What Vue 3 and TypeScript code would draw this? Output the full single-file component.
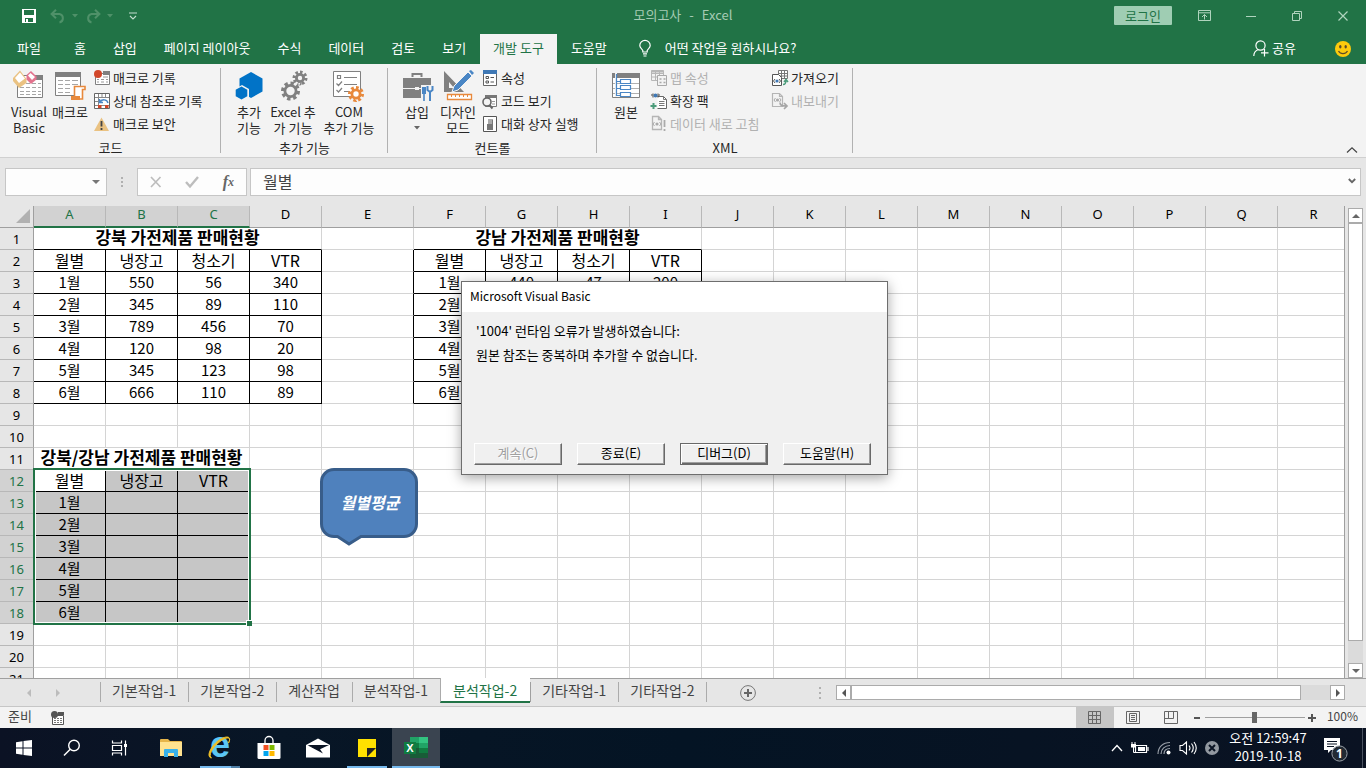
<script setup lang="ts">
import { ref } from 'vue'

interface Glyph { w: number; h: number; body: string }
interface Cell { key: string; text: string; span: number; cls: string[] }
interface SheetRow { n: number; cells: Cell[] }

const gear = (x: number, y: number, r: number, c: string, bg: string) =>
  `<circle cx="${x}" cy="${y}" r="${r}" fill="none" stroke="${c}" stroke-width="3.4" pathLength="16" stroke-dasharray="1.1 .9"/>` +
  `<circle cx="${x}" cy="${y}" r="${r - 2.2}" fill="${bg}" stroke="${c}" stroke-width="2.8"/>`

const glyphs: Record<string, Glyph> = {
  save: { w: 16, h: 16, body: '<path d="M1 1h14v14H1z" fill="#fff"/><path d="M3 2h10v5H3zM4 10h8v4H4z" fill="#217346"/><path d="M5 11h2v3H5z" fill="#fff"/>' },
  undo: { w: 16, h: 14, body: '<path d="M1.500 5h8a4.300 4.300 0 0 1 0 8.400M6 .8 1.600 5 6 9.200" fill="none" stroke="#4f9169" stroke-width="2"/>' },
  redo: { w: 16, h: 14, body: '<path d="M14.500 5h-8a4.300 4.300 0 0 0 0 8.400M10 .8 14.400 5 10 9.200" fill="none" stroke="#4f9169" stroke-width="2"/>' },
  tri: { w: 6, h: 4, body: '<path d="M0 0h6L3 3.400z" fill="#4f9169"/>' },
  custom: { w: 10, h: 8, body: '<path d="M1 1h8M2 4l3 3 3-3" fill="none" stroke="#c4decf" stroke-width="1.100"/>' },
  ribbonOpt: { w: 14, h: 12, body: '<path d="M.5.5h12v10H.5zM.5 2.800h12M6.500 9.500V4.500M4 7l2.500-2.500L9 7" fill="none" stroke="#b0d4be"/>' },
  min: { w: 10, h: 10, body: '<path d="M0 5.500h10" stroke="#b0d4be"/>' },
  restore: { w: 10, h: 10, body: '<path d="M.5 2.500h7v7h-7zM2.500 2.500v-2h7v7h-2" fill="none" stroke="#b0d4be"/>' },
  close: { w: 10, h: 10, body: '<path d="M.5.5l9 9M9.500.5l-9 9" stroke="#b0d4be" stroke-width="1.200"/>' },
  bulb: { w: 12, h: 17, body: '<path d="M3.800 12v-1.500C3 8.500.8 8 .8 5.500a5 5 0 0 1 10.400 0C11.200 8 9 8.500 8.200 10.500V12zM4 13.800h4M4.500 16h3" fill="none" stroke="#fff" stroke-width="1.200"/>' },
  share: { w: 16, h: 17, body: '<circle cx="7.500" cy="5.500" r="4.600" fill="none" stroke="#fff" stroke-width="1.200"/><path d="M.8 16c0-3.500 2-5.500 4.500-6.500M11.500 9v7.500M8 12.800h7.500" fill="none" stroke="#fff" stroke-width="1.200"/>' },
  smile: { w: 16, h: 16, body: '<circle cx="8" cy="8" r="8" fill="#fdca0c"/><ellipse cx="5.300" cy="5.800" rx="1.200" ry="1.800" fill="#5c4a2a"/><ellipse cx="10.700" cy="5.800" rx="1.200" ry="1.800" fill="#5c4a2a"/><path d="M3.500 10c2 3.600 7 3.600 9 0" fill="none" stroke="#5c4a2a" stroke-width="1.200"/>' },
  collapse: { w: 12, h: 6, body: '<path d="M1 5.500 6 .8l5 4.700" fill="none" stroke="#444" stroke-width="1.200"/>' },
  vb: { w: 32, h: 32, body: '<path d="M4.500 6.500h25v22h-25z" fill="#fff" stroke="#808080"/><path d="M23 6h7v5h-7z" fill="#808080"/><path d="M7 14.500h4m2 0h4m2 0h4m2 0h3M7 18.500h4m2 0h4m2 0h4m2 0h3M7 22.500h4m2 0h4m2 0h4m2 0h3M7 25.500h4m2 0h4m2 0h4m2 0h3" stroke="#a6a6a6"/><path d="M0 9 7 1.500 13.500 10v4L6 19 0 12z" fill="#eac282"/><path d="m2 9 5-5.500 5 6-6 4.500z" fill="#fff"/><path d="m13.500 6 4.500-4 5.500 5.500v3L18 15l-4.500-4.500z" fill="#e3738e"/><path d="m15 6.500 2.500-2.500 4.500 4-3 3z" fill="#fff"/>' },
  macro: { w: 32, h: 32, body: '<path d="M1.500 3.500h25v23h-25z" fill="#fff" stroke="#808080"/><path d="M1 3h26v5H1z" fill="#808080"/><path d="M4 11.500h5m2 0h5m2 0h6M4 15.500h5m2 0h5m2 0h6M4 19.500h5m2 0h5M4 23.500h5m2 0h5" stroke="#a6a6a6"/><path d="M20.500 28V17.500h10.500v3h-2.500V30H18v-2.500" fill="#fff" stroke="#e8893c" stroke-width="1.600"/><path d="M17 27h9v4h-9z" fill="#e8893c"/>' },
  addin: { w: 32, h: 32, body: '<path d="M18 3 29.500 9.500v13L18 29 6.500 22.500v-13z" fill="#0173c7"/><path d="m9 16 7 4v8l-7 4-7-4v-8z" fill="#f3f3f3"/><path d="m8.500 17.500 5.800 3.200v6.500l-5.800 3.200-5.800-3.200v-6.500z" fill="#0173c7"/>' },
  gears: { w: 32, h: 32, body: gear(13.5, 22, 7.8, '#808080', '#f3f3f3') + gear(23, 9, 5.8, '#808080', '#f3f3f3') },
  com: { w: 32, h: 32, body: '<path d="M.5 2.500h27v25H.5z" fill="#fff" stroke="#808080"/><path d="M4.500 6.500h3v3h-3zM11 8.500h13M11 15.500h13M11 22.500h6M3.500 14.500l2 2 3.500-4M3.500 21l2 2 3.500-4" fill="none" stroke="#808080" stroke-width="1.200"/>' + gear(23, 25, 6.3, '#e8893c', '#fff') },
  toolbox: { w: 32, h: 32, body: '<path d="M11.500 8V5h9v3" fill="none" stroke="#808080" stroke-width="2"/><path d="M2 9h28v20H2z" fill="#808080"/><path d="M2 19.500h28" stroke="#f3f3f3"/><path d="M14 18h4v3h-4z" fill="#f3f3f3"/><path d="M20 16h12v16H20z" fill="#f3f3f3"/><path d="M21 18h4v7h-4zM22.200 25h1.600v7h-1.600z" fill="#4a86c5"/><path d="M26.500 17v4l2.500 2 2.500-2v-4M29 22v10" fill="none" stroke="#4a86c5" stroke-width="2"/>' },
  design: { w: 32, h: 32, body: '<path fill-rule="evenodd" d="M2 2 22 23H2zM7 13v6h5z" fill="#808080"/><path d="M10 23 12 17 26 3l4 4-14 14z" fill="#4a86c5" stroke="#f3f3f3"/><path d="m27 2 2-1 3 3-2 2z" fill="#4a86c5"/><path d="M5.500 25.500h24v5h-24z" fill="#fff" stroke="#e8893c" stroke-width="1.300"/><path d="M9.500 26v2m4-2v2m4-2v2m4-2v2m4-2v2" stroke="#e8893c"/>' },
  source: { w: 32, h: 32, body: '<path d="M2.500 4.500h27v24h-27z" fill="#fff" stroke="#808080"/><path d="M2 4h28v5H2z" fill="#808080"/><path d="M3 14.500h26M3 19.500h26M3 24.500h26" stroke="#b0b0b0"/><path d="M6 4v24" stroke="#f3f3f3" stroke-width="2"/><path d="M6.500 5v21.500h4M6.500 12.500h4M6.500 19.500h4" fill="none" stroke="#4a86c5" stroke-width="1.200"/><path d="M10.500 10.500h10v4h-10zM10.500 16.500h10v4h-10zM10.500 23.500h10v4h-10z" fill="#fff" stroke="#4a86c5" stroke-width="1.200"/>' },
  record: { w: 16, h: 16, body: '<path d="M1.500 3.500h14v11h-14z" fill="#fff" stroke="#808080"/><path d="M9 1h7v4H9z" fill="#808080"/><path d="M3 9.500h2m2 0h3m2 0h2M3 12h2m2 0h3m2 0h2M9 7h5" stroke="#999"/><circle cx="4" cy="4" r="4" fill="#d2472a"/>' },
  relative: { w: 16, h: 16, body: '<path d="M.5.5h15v15H.5z" fill="#fff" stroke="#666"/><path d="M1 4.500h14M4.500 1v14M11.500 1v3M1 8.500h3M1 12.500h14M8 1v3" stroke="#888"/><path d="M5 5h10v7H5z" fill="#fff"/><path d="M6 9c2-3 7-3 8 1M5.500 6v3.500H9" fill="none" stroke="#4a86c5" stroke-width="1.500"/><path d="M4 12h3.500v3H4zM11 12h3.500v3H11z" fill="#d2472a"/>' },
  security: { w: 16, h: 16, body: '<path d="M7.500 1.500 15 15H0z" fill="#eac282"/><path d="M7.500 5v5.500M7.500 12v2" stroke="#444" stroke-width="1.800"/>' },
  props: { w: 16, h: 16, body: '<path d="M1.500.5h13v15h-13z" fill="#fff" stroke="#666"/><path d="M1 0h14v4H1z" fill="#3f78b5"/><path d="M4 6.500h2.500v2H4zM4 11h2.500v2H4zM8.500 7.500H12M8.500 12H12" fill="none" stroke="#555"/>' },
  viewCode: { w: 16, h: 16, body: '<path d="M3.500 2.500h11v11h-11z" fill="#fff" stroke="#777"/><path d="M3 2h12v3H3z" fill="#777"/><path d="M10 8.500h3M10 11h3" stroke="#999"/><circle cx="5" cy="9" r="4" fill="#f3f3f3" stroke="#666" stroke-width="1.600"/><path d="m7.500 12 3 3.500" stroke="#666" stroke-width="2"/>' },
  runDialog: { w: 16, h: 16, body: '<path d="M1.500.5h13v15h-13z" fill="#fff" stroke="#555"/><path d="M6 3h5v5H6z" fill="#aaa"/><path d="M5 8h5v5H5z" fill="#777"/><path d="M10.500 4v9M5 13.500h6" stroke="#777"/>' },
  mapProps: { w: 16, h: 16, body: '<path d="M.5.5h12v10H.5zM.5 3.500h12M4.500.5v10M8.500.5v10M.5 7h12" fill="none" stroke="#b7b7b7"/><path d="M.5.5h12v2H.5z" fill="#b7b7b7"/><path d="M6.500 5.500h9v10h-9z" fill="#f3f3f3" stroke="#a9a9a9"/><path d="M8.500 9h2m2 0h2m-6 3.500h2m2 0h2" stroke="#a9a9a9" stroke-width="1.500"/>' },
  expand: { w: 16, h: 16, body: '<path d="M6.500 3.500h6l3 3v9h-9" fill="#fff" stroke="#666"/><path d="M12.500 3.500v3h3M8 8.500h5.500M8 10.500h5.500M8 12.500h5.500" fill="none" stroke="#777"/><path d="M0 2h1.500M7.500 2H9M2 .5v4M7 .5v4" stroke="#444"/><circle cx="4.500" cy="2.500" r="1.900" fill="#3f78b5"/><path d="M2.500 10v6M-.5 13h6" stroke="#4c9c7b" stroke-width="2"/>' },
  refresh: { w: 16, h: 16, body: '<path d="M1.500.5h6l3 3v10h-9zM7.500.5v3h3" fill="none" stroke="#b5b5b5" stroke-width="1.300"/><path d="m3.500 6-1.500 2 1.500 2M8.500 6l1.500 2-1.500 2" fill="none" stroke="#aaa"/><circle cx="6" cy="8" r="1.600" fill="#aaa"/><path d="M13.500 4v7M13.500 13v2" stroke="#aaa" stroke-width="1.800"/>' },
  importX: { w: 16, h: 16, body: '<path d="M6.500.5h9v8h-9zM6.500 3.500h9M9.500.5v8M12.500.5v8M6.500 6h9" fill="#fff" stroke="#777"/><path d="M.5 4.500h6l3 3v8h-9z" fill="#fff" stroke="#555"/><path d="m3 9-1.500 2L3 13M7 9l1.500 2L7 13" fill="none" stroke="#555"/><circle cx="5" cy="11" r="1.600" fill="#3f78b5"/><path d="M11 14.500c3 0 3-2 3-4.500M12 12l2-2.500 2 2.500" fill="none" stroke="#4c9c7b" stroke-width="1.500"/>' },
  exportX: { w: 16, h: 16, body: '<path d="M.5.5h7l3 3v10H.5zM7.500.5v3h3" fill="none" stroke="#b5b5b5" stroke-width="1.200"/><path d="m3.500 5-1.500 2 1.500 2M7.500 5 9 7 7.500 9" fill="none" stroke="#aaa"/><circle cx="5.500" cy="7" r="1.600" fill="#aaa"/><path d="M8 9.500c0 3 2 3.500 7 3.500M12 10l3 3-3 3" fill="none" stroke="#a5a5a5" stroke-width="1.700"/>' },
  smallTri: { w: 8, h: 4, body: '<path d="M0 0h8L4 4z" fill="#777"/>' },
  cancel: { w: 12, h: 12, body: '<path d="m1 1 9.500 10M10.500 1 1 11" stroke="#bdbdbd" stroke-width="1.700"/>' },
  check: { w: 14, h: 12, body: '<path d="m1 6 4 4.500L13 1" fill="none" stroke="#bdbdbd" stroke-width="2.400"/>' },
  expandBar: { w: 8, h: 6, body: '<path d="m.8 1 3.200 3.200L7.200 1" fill="none" stroke="#666" stroke-width="1.800"/>' },
  corner: { w: 14, h: 14, body: '<path d="M14 0v14H0z" fill="#b1b1b1"/>' },
  up: { w: 8, h: 4, body: '<path d="M4 0l4 4H0z" fill="#666"/>' },
  down: { w: 8, h: 4, body: '<path d="M0 0h8L4 4z" fill="#666"/>' },
  left: { w: 4, h: 8, body: '<path d="M4 0v8L0 4z" fill="#555"/>' },
  right: { w: 4, h: 8, body: '<path d="M0 0v8l4-4z" fill="#555"/>' },
  prev: { w: 4, h: 8, body: '<path d="M4 0v8L0 4z" fill="#bcbcbc"/>' },
  next: { w: 4, h: 8, body: '<path d="M0 0v8l4-4z" fill="#bcbcbc"/>' },
  plus: { w: 16, h: 16, body: '<circle cx="8" cy="8" r="7.400" fill="none" stroke="#777"/><path d="M8 4v8M4 8h8" stroke="#666" stroke-width="2"/>' },
  macroState: { w: 14, h: 14, body: '<path d="M1.500 4.500h11v9h-11z" fill="#fff" stroke="#555"/><path d="M7 1h6v3H7z" fill="#555"/><path d="M3 7.500h2m1 0h2m1 0h2M3 9.500h2m1 0h2m1 0h2M3 11.500h2m1 0h2m1 0h2" stroke="#777"/><circle cx="3.500" cy="3.500" r="3.500" fill="#555"/>' },
  normal: { w: 14, h: 14, body: '<path d="M.5.5h12v12H.5zM4.500.5v12M8.500.5v12M.5 4.500h12M.5 8.500h12" fill="none" stroke="#666"/>' },
  pageLayout: { w: 14, h: 14, body: '<path d="M.5.5h13v12H.5zM3.500 2.500h7v8h-7zM5 4.500h4M5 6.500h4M5 8.500h4" fill="none" stroke="#666"/>' },
  pageBreak: { w: 14, h: 14, body: '<path d="M.5.5h13v12H.5zM4.500.5v7M9.500.5v7M.5 7.500h9" fill="none" stroke="#666"/>' },
  start: { w: 16, h: 16, body: '<path d="M0 2.200 6.500 1.300v6.200H0zM7.500 1.100 16 0v7.500H7.500zM0 8.500h6.500v6.200L0 13.800zM7.500 8.500H16V16l-8.500-1.100z" fill="#fff"/>' },
  search: { w: 18, h: 18, body: '<circle cx="11" cy="6.500" r="5.300" fill="none" stroke="#fff" stroke-width="1.400"/><path d="M7.200 10.300 1 16.500" stroke="#fff" stroke-width="1.500"/>' },
  taskview: { w: 18, h: 16, body: '<path d="M1.500.5v2.500h9V.5M1.500 5.500h9v5h-9zM1.500 15.500V13h9v2.500M14.500.5v15" fill="none" stroke="#fff" stroke-width="1.200"/><path d="M13 4h3v3h-3z" fill="#fff"/>' },
  explorer: { w: 22, h: 20, body: '<path d="M0 2q0-1 1-1h7l2 2h11q1 0 1 1v14H0z" fill="#e6b54a"/><path d="M0 4h22v14H0z" fill="#ffe28f"/><path d="M4 19v-7q0-1 1-1h12q1 0 1 1v7h-4v-4H8v4z" fill="#39b1ea"/>' },
  ie: { w: 24, h: 24, body: '<text x="12" y="21" text-anchor="middle" font-family="Liberation Sans, sans-serif" font-weight="bold" font-size="36" fill="#5cc7f5">e</text><path d="M3.500 22C-2.500 21 3 9 12 3.500 19-.8 24 .5 20.500 7 24 0 18 1 12 5.500 4 11.500 0 20 3.500 22z" fill="#eebf28" stroke="#eebf28"/>' },
  store: { w: 24, h: 24, body: '<path d="M8 7V4.500a4 4 0 0 1 8 0V7" fill="none" stroke="#fff" stroke-width="1.300"/><path d="M.5 7h23v14.500q0 1.500-1.500 1.500H2q-1.500 0-1.500-1.500z" fill="#fff"/><path d="M6.500 9h5v5h-5z" fill="#f25022"/><path d="M12.500 9h5v5h-5z" fill="#7fba00"/><path d="M6.500 15h5v5h-5z" fill="#00a4ef"/><path d="M12.500 15h5v5h-5z" fill="#ffb900"/>' },
  mail: { w: 24, h: 20, body: '<path d="M0 7 12 .5 24 7v12.500H0z" fill="#fff"/><path d="M1.500 7h21.500l-9.500 4.500h-2.500z" fill="#0a1424"/><path d="m2 7.500 15 8-3.500-5z" fill="#0a1424"/>' },
  sticky: { w: 18, h: 18, body: '<path d="M0 0h18v18H0z" fill="#ffe100"/><path d="M9 18V9h9z" fill="#222"/>' },
  excel: { w: 24, h: 22, body: '<path d="M6 0h9v6H6z" fill="#21a366"/><path d="M15 0h9v6h-9z" fill="#33c481"/><path d="M6 6h9v5H6z" fill="#107c41"/><path d="M15 6h9v5h-9z" fill="#21a366"/><path d="M6 11h18v10H6z" fill="#185c37"/><path d="M15 11h9v5h-9z" fill="#107c41"/><path d="M0 5h12v12H0z" fill="#107c41"/><text x="6" y="15" text-anchor="middle" font-family="Liberation Sans, sans-serif" font-weight="bold" font-size="11" fill="#fff">X</text>' },
  chevron: { w: 12, h: 8, body: '<path d="m1 7 5-5.500L11 7" fill="none" stroke="#fff" stroke-width="1.300"/>' },
  battery: { w: 18, h: 12, body: '<path d="M4.500 3.500h11v7h-11zM17 5v4" fill="none" stroke="#fff" stroke-width="1.200"/><path d="M7 5h7v4H7z" fill="#fff"/><path d="M0 2h5v3.500H0z" fill="#fff"/><path d="M1 0v3M4 0v3M2.500 5v5.500H5" fill="none" stroke="#fff"/>' },
  wifi: { w: 14, h: 14, body: '<path d="M1 13C1 6 6 1.500 13 1.500M4 13c0-5 4-8.500 9-8.500M7 13c0-3.500 2.500-5.500 6-5.500" fill="none" stroke="#999fa8" stroke-width="1.200"/><circle cx="11.500" cy="11.500" r="2" fill="#fff"/>' },
  volume: { w: 18, h: 14, body: '<path d="M1 4.500h2.500l4-3.500v12l-4-3.500H1zM10 4.500q2 2.500 0 5M12.500 2.500q3.500 4.500 0 9M15 1q4.500 6 0 12" fill="none" stroke="#fff" stroke-width="1.100"/>' },
  blocked: { w: 14, h: 14, body: '<circle cx="7" cy="7" r="7" fill="#9298a0"/><path d="m4 4 6 6M10 4l-6 6" stroke="#0b1424" stroke-width="2"/>' },
  notify: { w: 26, h: 26, body: '<path d="M1 1h16v12H8l-3 3v-3H1z" fill="#fff"/><path d="M4 4.500h10M4 7h10M4 9.500h7" stroke="#0b1424"/><circle cx="16.500" cy="16.500" r="7.600" fill="#222a33" stroke="#9aa0a8"/><text x="16.500" y="21" text-anchor="middle" font-family="Noto Sans, sans-serif" font-weight="bold" font-size="12" fill="#fff">1</text>' },
}

const tabs = ['홈', '삽입', '페이지 레이아웃', '수식', '데이터', '검토', '보기', '개발 도구', '도움말']

const codeItems = [
  { icon: 'record', text: '매크로 기록', off: false },
  { icon: 'relative', text: '상대 참조로 기록', off: false },
  { icon: 'security', text: '매크로 보안', off: false },
]
const controlItems = [
  { icon: 'props', text: '속성', off: false },
  { icon: 'viewCode', text: '코드 보기', off: false },
  { icon: 'runDialog', text: '대화 상자 실행', off: false },
]
const xmlItems = [
  { icon: 'mapProps', text: '맵 속성', off: true },
  { icon: 'expand', text: '확장 팩', off: false },
  { icon: 'refresh', text: '데이터 새로 고침', off: true },
]
const transferItems = [
  { icon: 'importX', text: '가져오기', off: false },
  { icon: 'exportX', text: '내보내기', off: true },
]

const columns = 'ABCDEFGHIJKLMNOPQR'.split('')
const values: Record<string, string> = {
  A1: '강북 가전제품 판매현황', F1: '강남 가전제품 판매현황', A11: '강북/강남 가전제품 판매현황',
  G3: '440', H3: '47', I3: '200',
  A12: '월별', B12: '냉장고', C12: 'VTR',
}
const north = [[550, 56, 340], [345, 89, 110], [789, 456, 70], [120, 98, 20], [345, 123, 98], [666, 110, 89]]
for (const start of ['A', 'F']) {
  const at = columns.indexOf(start)
  ;['월별', '냉장고', '청소기', 'VTR'].forEach((t, i) => { values[columns[at + i] + '2'] = t })
}
north.forEach((line, i) => {
  const month = `${i + 1}월`
  values['A' + (i + 3)] = month
  values['F' + (i + 3)] = month
  values['A' + (i + 13)] = month
  line.forEach((v, c) => { values[columns[c + 1] + (i + 3)] = String(v) })
})
const spans: Record<string, number> = { A1: 4, F1: 4, A11: 3 }

const rows: SheetRow[] = []
for (let n = 1; n <= 21; n++) {
  const cells: Cell[] = []
  for (let c = 0; c < columns.length;) {
    const key = columns[c] + n
    const span = spans[key] ?? 1
    const cls: string[] = []
    const text = values[key] ?? ''
    const inTop = n >= 2 && n <= 8
    const framed = (inTop && (c <= 3 || (c >= 5 && c <= 8))) || (n >= 12 && n <= 18 && c <= 2)
    if (framed) cls.push('framed')
    if (inTop && c === 4) cls.push('edge')
    if (span > 1) cls.push('heading')
    if (/^\d/.test(text)) cls.push('figure')
    if (n >= 12 && n <= 18 && c <= 2 && key !== 'A12') cls.push('picked')
    cells.push({ key, text, span, cls })
    c += span
  }
  rows.push({ n, cells })
}

const sheets = ['기본작업-1', '기본작업-2', '계산작업', '분석작업-1', '분석작업-2', '기타작업-1', '기타작업-2']
const currentSheet = ref('분석작업-2')
const formula = ref('월별')
const nameBox = ref('')
const zoom = ref(50)

const apps = [
  { icon: 'explorer', label: '파일 탐색기', state: '' },
  { icon: 'ie', label: 'Internet Explorer', state: 'open split' },
  { icon: 'store', label: 'Microsoft Store', state: '' },
  { icon: 'mail', label: '메일', state: '' },
  { icon: 'sticky', label: '스티커 메모', state: 'open' },
  { icon: 'excel', label: 'Excel', state: 'open current' },
]
const g = (name: string) => glyphs[name]
</script>

<template>
  <div class="screen">
    <header class="top">
      <div class="titlebar">
        <div class="quick">
          <button class="plain" aria-label="저장"><svg class="save" :width="g('save').w" :height="g('save').h" v-html="g('save').body" /></button>
          <button class="plain pair" aria-label="실행 취소"><svg width="16" height="14" v-html="g('undo').body" /><svg width="6" height="4" v-html="g('tri').body" /></button>
          <button class="plain pair" aria-label="다시 실행"><svg width="16" height="14" v-html="g('redo').body" /><svg width="6" height="4" v-html="g('tri').body" /></button>
          <button class="plain" aria-label="빠른 실행 도구 모음 사용자 지정"><svg width="10" height="8" v-html="g('custom').body" /></button>
        </div>
        <div class="doc"><span>모의고사</span><span>-</span><span>Excel</span></div>
        <div class="window">
          <button class="login">로그인</button>
          <button v-for="w in ['ribbonOpt', 'min', 'restore', 'close']" :key="w" class="plain win" :aria-label="w">
            <svg :width="g(w).w" :height="g(w).h" v-html="g(w).body" />
          </button>
        </div>
      </div>
      <nav class="tabs">
        <button class="tab file">파일</button>
        <button v-for="t in tabs" :key="t" class="tab" :class="{ active: t === '개발 도구' }">{{ t }}</button>
        <button class="tab ask"><svg width="12" height="17" v-html="g('bulb').body" />어떤 작업을 원하시나요?</button>
        <button class="plain share"><svg width="16" height="17" v-html="g('share').body" />공유</button>
        <button class="plain smile" aria-label="의견"><svg width="16" height="16" v-html="g('smile').body" /></button>
      </nav>
    </header>

    <section class="ribbon">
      <div class="group">
        <div class="tools">
          <button class="big w44"><svg width="32" height="32" v-html="g('vb').body" />Visual<br>Basic</button>
          <button class="big w40"><svg width="32" height="32" v-html="g('macro').body" />매크로</button>
          <div class="stack">
            <button v-for="i in codeItems" :key="i.text" class="small"><svg width="16" height="16" v-html="g(i.icon).body" />{{ i.text }}</button>
          </div>
        </div>
        <div class="label">코드</div>
      </div>
      <div class="group">
        <div class="tools">
          <button class="big w40"><svg width="32" height="32" v-html="g('addin').body" />추가<br>기능</button>
          <button class="big w48"><svg width="32" height="32" v-html="g('gears').body" />Excel 추<br>가 기능</button>
          <button class="big w64"><svg width="32" height="32" v-html="g('com').body" />COM<br>추가 기능</button>
        </div>
        <div class="label">추가 기능</div>
      </div>
      <div class="group">
        <div class="tools">
          <button class="big w44"><svg width="32" height="32" v-html="g('toolbox').body" />삽입<svg class="drop" width="6" height="4"><path d="M0 0h6L3 3.500z" fill="#666" /></svg></button>
          <button class="big w40"><svg width="32" height="32" v-html="g('design').body" />디자인<br>모드</button>
          <div class="stack">
            <button v-for="i in controlItems" :key="i.text" class="small"><svg width="16" height="16" v-html="g(i.icon).body" />{{ i.text }}</button>
          </div>
        </div>
        <div class="label">컨트롤</div>
      </div>
      <div class="group">
        <div class="tools">
          <button class="big w44"><svg width="32" height="32" v-html="g('source').body" />원본</button>
          <div class="stack map">
            <button v-for="i in xmlItems" :key="i.text" class="small" :disabled="i.off"><svg width="16" height="16" v-html="g(i.icon).body" />{{ i.text }}</button>
          </div>
          <div class="stack">
            <button v-for="i in transferItems" :key="i.text" class="small" :disabled="i.off"><svg width="16" height="16" v-html="g(i.icon).body" />{{ i.text }}</button>
          </div>
        </div>
        <div class="label">XML</div>
      </div>
      <button class="plain collapse" aria-label="리본 메뉴 축소"><svg width="12" height="6" v-html="g('collapse').body" /></button>
    </section>

    <section class="formula">
      <div class="box name"><input v-model="nameBox" aria-label="이름 상자"><svg width="8" height="4" v-html="g('smallTri').body" /></div>
      <span class="dots"><i /><i /><i /></span>
      <div class="box actions">
        <button class="plain" aria-label="취소"><svg width="12" height="12" v-html="g('cancel').body" /></button>
        <button class="plain" aria-label="입력"><svg width="14" height="12" v-html="g('check').body" /></button>
        <button class="plain fx" aria-label="함수 삽입">f<sub>x</sub></button>
      </div>
      <div class="box value"><input v-model="formula" aria-label="수식 입력줄"><svg width="8" height="6" v-html="g('expandBar').body" /></div>
    </section>

    <main class="work">
      <div class="grid">
        <table>
          <colgroup>
            <col class="c-head">
            <col v-for="c in columns" :key="c" :class="c === 'E' ? 'c-wide' : 'c-std'">
          </colgroup>
          <thead>
            <tr>
              <th class="corner"><svg width="14" height="14" v-html="g('corner').body" /></th>
              <th v-for="(c, i) in columns" :key="c" scope="col" :class="{ on: i < 3 }">{{ c }}</th>
            </tr>
          </thead>
          <tbody>
            <tr v-for="r in rows" :key="r.n">
              <th scope="row" :class="{ on: r.n >= 12 && r.n <= 18 }">{{ r.n }}</th>
              <td v-for="c in r.cells" :key="c.key" :colspan="c.span" :class="c.cls">{{ c.text }}</td>
            </tr>
          </tbody>
        </table>
        <div class="selection"><i /></div>
        <button class="balloon">
          <svg width="98" height="78"><path d="M14 1.500h70a12.500 12.500 0 0 1 12.500 12.500v42a12.500 12.500 0 0 1-12.500 12.500H41L29 76 17.500 68.500H14A12.500 12.500 0 0 1 1.500 56V14A12.500 12.500 0 0 1 14 1.500z" fill="#4f81bd" stroke="#385d8a" stroke-width="3" /></svg>
          <span>월별평균</span>
        </button>
      </div>
      <div class="vscroll">
        <button class="arrow" aria-label="위로"><svg width="8" height="4" v-html="g('up').body" /></button>
        <div class="vtrack"><div class="vthumb" /></div>
        <button class="arrow" aria-label="아래로"><svg width="8" height="4" v-html="g('down').body" /></button>
      </div>
    </main>

    <section class="sheetbar">
      <div class="steps">
        <button class="plain" aria-label="이전 시트"><svg width="4" height="8" v-html="g('prev').body" /></button>
        <button class="plain" aria-label="다음 시트"><svg width="4" height="8" v-html="g('next').body" /></button>
      </div>
      <button v-for="s in sheets" :key="s" class="sheet" :class="{ current: s === currentSheet }" @click="currentSheet = s">{{ s }}</button>
      <button class="plain add" aria-label="새 시트"><svg width="16" height="16" v-html="g('plus').body" /></button>
      <span class="dots end"><i /><i /><i /></span>
      <div class="hscroll">
        <button class="arrow" aria-label="왼쪽"><svg width="4" height="8" v-html="g('left').body" /></button>
        <div class="htrack"><div class="hthumb" /></div>
        <button class="arrow" aria-label="오른쪽"><svg width="4" height="8" v-html="g('right').body" /></button>
      </div>
    </section>

    <footer class="status">
      <span class="ready">준비</span>
      <button class="plain rec" aria-label="매크로 기록"><svg width="14" height="14" v-html="g('macroState').body" /></button>
      <div class="views">
        <button v-for="v in ['normal', 'pageLayout', 'pageBreak']" :key="v" class="plain view" :class="{ on: v === 'normal' }" :aria-label="v"><svg width="14" height="14" v-html="g(v).body" /></button>
      </div>
      <button class="plain step" aria-label="축소"><svg width="8" height="8"><path d="M1 4h6" stroke="#555" stroke-width="2" /></svg></button>
      <input v-model="zoom" class="slider" type="range" min="0" max="100" aria-label="확대/축소">
      <button class="plain step" aria-label="확대"><svg width="8" height="8"><path d="M0 4h8M4 0v8" stroke="#555" stroke-width="2" /></svg></button>
      <span class="percent">100%</span>
    </footer>

    <footer class="taskbar">
      <button v-for="s in ['start', 'search', 'taskview']" :key="s" class="plain task" :aria-label="s"><svg :width="g(s).w" :height="g(s).h" v-html="g(s).body" /></button>
      <div class="apps">
        <button v-for="a in apps" :key="a.icon" class="plain task" :class="a.state" :aria-label="a.label"><svg :width="g(a.icon).w" :height="g(a.icon).h" v-html="g(a.icon).body" /></button>
      </div>
      <div class="tray">
        <button v-for="t in ['chevron', 'battery', 'wifi', 'volume', 'blocked']" :key="t" class="plain" :aria-label="t"><svg :width="g(t).w" :height="g(t).h" v-html="g(t).body" /></button>
      </div>
      <div class="clock"><span>오전 12:59:47</span><span>2019-10-18</span></div>
      <button class="plain notify" aria-label="알림"><svg width="26" height="26" v-html="g('notify').body" /></button>
    </footer>

    <div class="dialog" role="dialog" aria-labelledby="dlg-title">
      <div id="dlg-title" class="caption">Microsoft Visual Basic</div>
      <div class="message">
        <p>'1004' 런타임 오류가 발생하였습니다:</p>
        <p>원본 참조는 중복하며 추가할 수 없습니다.</p>
      </div>
      <div class="choices">
        <button disabled>계속(C)</button>
        <button>종료(E)</button>
        <button class="default">디버그(D)</button>
        <button>도움말(H)</button>
      </div>
    </div>
  </div>
</template>

<style>
body { margin: 0; overflow: hidden; }
</style>

<style scoped>
.screen {
  position: relative;
  display: flex;
  flex-direction: column;
  height: 100vh;
  overflow: hidden;
  background: #e6e6e6;
  color: #262626;
  font: 13px/16px "Noto Sans CJK KR", "Noto Sans", sans-serif;
}
button, input { font: inherit; color: inherit; }
svg { display: block; flex: none; overflow: visible; }
.plain { display: flex; align-items: center; justify-content: center; padding: 0; border: 0; background: none; }

.top { background: #217346; color: #fff; }
.titlebar { display: grid; grid-template-columns: 1fr auto 1fr; height: 34px; }
.quick { display: flex; align-items: center; padding: 0 0 2px 21px; gap: 13px; }
.pair { gap: 6px; }
.quick .plain:last-child { margin-left: 2px; }
.quick .plain:nth-child(3) { margin-left: -6px; }
.doc { display: flex; gap: 8px; align-items: center; padding-bottom: 4px; color: #a5cbb4; }
.window { display: flex; justify-content: flex-end; height: 31px; align-items: center; }
.login { width: 58px; height: 19px; margin-right: 10px; padding: 0; border: 0; border-radius: 1px; background: #9fcdb3; color: #217346; line-height: 18px; }
.win { width: 46px; height: 31px; }
.tabs { display: flex; gap: 1px; height: 30px; align-items: stretch; }
.tab { display: flex; align-items: center; padding: 0 13px 2px; border: 0; background: none; white-space: nowrap; }
.tab.file { padding: 0 19px 2px 17px; }
.tab.active { background: #f3f3f3; color: #217346; }
.tab.ask { gap: 14px; padding-left: 18px; }
.share { gap: 3px; margin-left: auto; padding-bottom: 2px; }
.smile { margin: 0 15px 0 38px; }

.ribbon {
  display: grid;
  grid-template-columns: 221px 167px 209px 256px 1fr;
  height: 93px;
  background: #f3f3f3;
  border-bottom: 1px solid #d0d0d0;
}
.group { display: flex; flex-direction: column; background: linear-gradient(#b1b1b1, #b1b1b1) no-repeat right 0 top 4px / 1px 85px; }
.tools { display: flex; height: 74px; padding: 2px 0 0 8px; }
.big { display: block; padding: 3px 0 0; border: 0; background: none; text-align: center; white-space: nowrap; align-self: flex-start; }
.big svg { margin: 0 auto 3px; }
.big .drop { margin: 6px auto 0; }
.w40 { width: 40px; }
.w44 { width: 42px; }
.w48 { width: 48px; }
.w64 { width: 64px; }
.stack { display: flex; flex-direction: column; margin-left: 4px; }
.stack.map { width: 117px; }
.small { display: flex; align-items: center; gap: 3px; height: 23px; padding: 0; border: 0; background: none; white-space: nowrap; }
.small:disabled { color: #b1b1b1; }
.label { text-align: center; }
.collapse { align-self: end; justify-self: end; margin: 0 8px 4px 0; }

.formula { display: flex; height: 28px; padding: 10px 5px; flex: none; }
.box { display: flex; align-items: center; box-sizing: border-box; height: 28px; border: 1px solid #c6c6c6; background: #fdfdfd; }
.box input { flex: 1; min-width: 0; border: 0; padding: 0; background: none; outline: 0; }
.name { width: 102px; padding-right: 6px; }
.dots { display: flex; flex-direction: column; justify-content: center; gap: 2px; width: 30px; align-items: center; }
.dots i { width: 2px; height: 2px; background: #b0b0b0; }
.actions { width: 110px; padding: 0 12px; justify-content: space-between; }
.fx { font: italic bold 16px/18px "Liberation Serif", serif; color: #666; }
.fx sub { font-size: 12px; line-height: 10px; }
.value { flex: 1; margin-left: 3px; padding: 0 4px 2px 12px; }
.value input { font-size: 16px; color: #444; }

.work { display: flex; flex: 1; min-height: 0; }
.grid { position: relative; flex: 1; min-width: 0; overflow: hidden; border-right: 1px solid #9f9f9f; }
table { table-layout: fixed; width: 1350px; border-collapse: separate; border-spacing: 0; color: #000; background: #fff; }
.c-head { width: 34px; }
.c-std { width: 72px; }
.c-wide { width: 92px; }
th, td { box-sizing: border-box; height: 22px; padding: 0; line-height: 20px; text-align: center; white-space: nowrap; }
th { background: #e6e6e6; font-weight: normal; font-size: 13px; font-family: "Noto Sans", sans-serif; }
thead th { border-right: 1px solid #b8b8b8; border-bottom: 1px solid #9f9f9f; line-height: 17px; padding-bottom: 4px; }
thead th.on { background: #d2d2d2; color: #217346; border-bottom: 2px solid #217346; padding-bottom: 3px; }
thead .corner { border-right-color: #9f9f9f; vertical-align: bottom; }
.corner svg { margin: 0 0 0 16px; }
tbody th { border-right: 1px solid #9f9f9f; border-bottom: 1px solid #b8b8b8; }
tbody th.on { background: #d2d2d2; color: #217346; }
td { border-right: 1px solid #d4d4d4; border-bottom: 1px solid #d4d4d4; padding-bottom: 2px; font-size: 16px; line-height: 18px; }
td.heading { font-size: 17px; font-weight: bold; border-bottom-color: #000; padding-bottom: 4px; line-height: 16px; }
td.figure { font-size: 15px; }
td.framed { border-color: #000; }
td.edge { border-right-color: #000; }
td.picked { background: #c6c6c6; }
.selection { position: absolute; left: 33px; top: 262px; width: 218px; height: 157px; box-sizing: border-box; border: 2px solid #217346; box-shadow: inset 0 0 0 1px #fff; }
.selection i { position: absolute; right: -3px; bottom: -3px; width: 5px; height: 5px; background: #217346; border: 1px solid #fff; border-width: 1px 0 0 1px; }
.balloon { position: absolute; left: 320px; top: 262px; width: 98px; height: 78px; padding: 0; border: 0; background: none; color: #fff; }
.balloon span { position: absolute; inset: 0 0 10px 2px; display: flex; align-items: center; justify-content: center; font-size: 16px; font-weight: bold; font-style: italic; }

.vscroll { display: flex; flex-direction: column; width: 15px; padding: 2px 3px 0; }
.arrow { display: flex; align-items: center; justify-content: center; flex: none; box-sizing: border-box; width: 15px; height: 15px; padding: 0; border: 1px solid #ababab; background: #fff; }
.vtrack { flex: 1; background: #dbdbdb; }
.vthumb { height: 95%; box-sizing: border-box; border: 1px solid #ababab; background: #fff; }

.sheetbar { display: flex; flex: none; height: 27px; border-top: 1px solid #9f9f9f; border-bottom: 1px solid #c6c6c6; }
.steps { display: flex; gap: 25px; width: 73px; padding-left: 27px; }
.sheet { display: flex; box-sizing: border-box; height: 20px; margin-top: 3px; padding: 0 12px 0 11px; border: 0; border-left: 1px solid #ababab; background: none; color: #444; font-size: 14px; line-height: 16px; white-space: nowrap; }
.sheet.current { height: 25px; margin-top: -1px; padding: 4px 13px 0 12px; border-bottom: 2px solid #217346; background: #fff; color: #217346; }
.sheet.current + .sheet { border-left-color: #9f9f9f; }
.sheet:nth-last-child(4) { border-right: 1px solid #ababab; }
.add { margin-left: 33px; }
.dots.end { margin-left: auto; gap: 3px; width: 32px; }
.hscroll { display: flex; align-self: flex-start; width: 509px; margin: 6px 21px 0 0; }
.htrack { flex: 1; background: #dbdbdb; }
.hthumb { width: 94%; height: 15px; box-sizing: border-box; border: 1px solid #ababab; background: #fff; }

.status { display: flex; align-items: center; flex: none; height: 21px; padding-left: 8px; background: #f3f3f3; color: #444; }
.ready { padding-bottom: 3px; }
.rec { margin-left: 19px; }
.views { display: flex; margin-left: auto; }
.view { width: 38px; height: 21px; }
.view.on { background: #c6c6c6; }
.step { width: 15px; height: 21px; }
.slider { appearance: none; width: 100px; height: 13px; margin: 0; background: linear-gradient(#9f9f9f, #9f9f9f) no-repeat center / 100% 1px; }
.slider::-webkit-slider-thumb { appearance: none; width: 5px; height: 11px; background: #666; }
.percent { margin: 0 8px 0 7px; padding-bottom: 3px; font-size: 12px; }

.taskbar { display: flex; flex: none; height: 40px; background: linear-gradient(90deg, #0b1224, #081626 20%, #041424 50%, #0a1222); color: #fff; }
.task { box-sizing: border-box; width: 48px; height: 40px; }
.apps { display: flex; gap: 1px; margin-left: 3px; }
.open { background: linear-gradient(#76b9ed, #76b9ed) no-repeat center bottom / 40px 2px; }
.split { background: linear-gradient(90deg, #76b9ed 31px, #4f7fa6 31px) no-repeat center bottom / 40px 2px; }
.current.task { background: linear-gradient(#76b9ed, #76b9ed) no-repeat center bottom / 100% 2px, #3a4450; }
.tray { display: flex; align-items: center; gap: 8px; margin-left: auto; }
.clock { display: flex; flex-direction: column; align-items: center; justify-content: center; width: 98px; padding-bottom: 3px; line-height: 18px; }
.notify { width: 46px; justify-content: flex-start; padding: 4px 0 0 6px; margin-right: 3px; border-right: 1px solid #4a5260; }

.dialog {
  position: absolute;
  left: 461px;
  top: 281px;
  width: 425px;
  border: 1px solid #6e6e6e;
  background: #f0f0f0;
  color: #000;
  box-shadow: 0 3px 12px rgba(0, 0, 0, .35);
}
.caption { padding: 6px 8px 8px; background: #fff; font-size: 12px; line-height: 16px; }
.message { min-height: 116px; padding: 7px 14px; box-sizing: border-box; }
.message p { margin: 0; line-height: 24px; }
.choices { display: flex; gap: 15px; padding: 15px 12px 9px; }
.choices button { width: 88px; height: 22px; padding: 0 0 2px; box-sizing: border-box; border: 1px solid; border-color: #fff #696969 #696969 #fff; background: #f0f0f0; box-shadow: inset -1px -1px #a0a0a0; line-height: 16px; }
.choices .default { border-color: #696969; box-shadow: inset 1px 1px #fff, inset -1px -1px #696969, inset -2px -2px #a0a0a0; }
.choices button:disabled { color: #a0a0a0; text-shadow: 1px 1px #fff; }
</style>
